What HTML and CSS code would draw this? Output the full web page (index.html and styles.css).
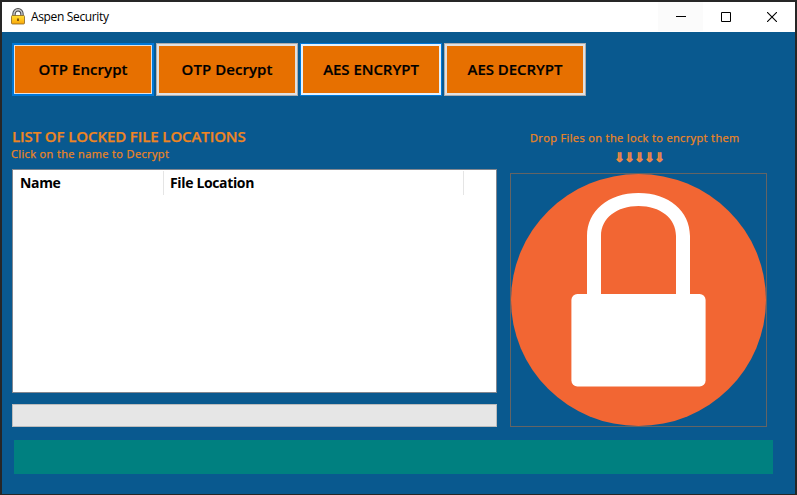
FILE: index.html
```html
<!DOCTYPE html>
<html lang="en">
<head>
<meta charset="utf-8">
<title>Aspen Security</title>
<link rel="stylesheet" href="styles.css">
</head>
<body>
<div class="window">
  <header class="titlebar">
    <svg class="app-icon" width="16" height="18" viewBox="0 0 16 18">
      <defs><linearGradient id="gold" x1="0" y1="0" x2="0" y2="1"><stop offset="0" stop-color="#ffe03a"/><stop offset="0.45" stop-color="#ffc81e"/><stop offset="1" stop-color="#f8a50c"/></linearGradient></defs>
      <path d="M4 9V6a4 4.200 0 0 1 8 0v3" fill="none" stroke="#4b4b4b" stroke-width="3.4"/>
      <path d="M4 9V6a4 4.200 0 0 1 8 0v3" fill="none" stroke="#c9c9c9" stroke-width="1.4"/>
      <rect x="1.500" y="7.500" width="13" height="8.500" rx="1" fill="url(#gold)" stroke="#8a6420" stroke-width=".8"/>
      <path d="M7.200 10.500h1.600v2.500H7.200z" fill="#6b3c08"/>
    </svg>
    <span class="app-name">Aspen Security</span>
    <div class="controls">
      <span class="control hovered"><svg width="10" height="10"><path d="M0 4.500h10" stroke="#000"/></svg></span>
      <span class="control"><svg width="10" height="10"><path d="M.5.5h9v9h-9z" fill="none" stroke="#000"/></svg></span>
      <span class="control"><svg width="10" height="10"><path d="M0 0l10 10M10 0L0 10" stroke="#000" stroke-width="1.1"/></svg></span>
    </div>
  </header>
  <main class="content">
    <nav class="toolbar">
      <button class="action focused"><span class="mixed">OTP Encrypt</span></button>
      <button class="action"><span class="mixed">OTP Decrypt</span></button>
      <button class="action hot"><span class="caps">AES ENCRYPT</span></button>
      <button class="action"><span class="caps">AES DECRYPT</span></button>
    </nav>
    <div class="panels">
      <section class="files">
        <h1>LIST OF LOCKED FILE LOCATIONS</h1>
        <p class="hint">Click on the name to Decrypt</p>
        <div class="list">
          <div class="col name">Name</div>
          <div class="col location">File Location</div>
        </div>
        <div class="progress"></div>
      </section>
      <section class="drop">
        <p class="drop-label">Drop Files on the lock to encrypt them</p>
        <p class="arrows">⇓⇓⇓⇓⇓</p>
        <div class="target">
          <svg width="255" height="252" viewBox="0 0 255 252">
            <ellipse cx="127.500" cy="126" rx="127.500" ry="126" fill="#f26633"/>
            <path fill="#fff" d="M76 122V62C76 37 97 19 127.500 19S179 37 179 62V122H165V62C165 44 149 32 127.500 32S90 44 90 62V122Z"/>
            <rect x="60.400" y="120" width="134.200" height="92.500" rx="6" fill="#fff"/>
          </svg>
        </div>
      </section>
    </div>
    <div class="status"></div>
  </main>
</div>
</body>
</html>
```
FILE: styles.css
```css
* { box-sizing: border-box; }
body { margin: 0; background: #262626; font-family: "Open Sans", sans-serif; }
h1, p { margin: 0; white-space: nowrap; }
svg { display: block; }
.window { width: 797px; height: 495px; padding: 2px 2px 1px; }
.titlebar { height: 30px; background: #fff; display: flex; align-items: center; padding-left: 8px; }
.app-icon { margin-top: -1px; }
.app-name { margin-left: 5px; font-size: 12px; line-height: 16px; letter-spacing: -0.35px; color: #000; }
.controls { display: flex; margin-left: auto; height: 100%; }
.control { width: 45px; height: 29px; display: flex; align-items: center; justify-content: center; }
.control:last-child { width: 47px; }
.hovered { background: #fbfbfb; }
.content { height: 462px; background: #09598f; padding: 11px 0 0 10px; }
.toolbar { display: flex; gap: 2px; }
.action { width: 142px; height: 53px; margin: 0; padding: 0 0 2px; background: #e77000; border: 1px solid #adadad; box-shadow: inset 0 0 0 2px #e1e1e1; color: #000; font: 600 15px/20px "Open Sans", sans-serif; white-space: nowrap; -webkit-text-stroke: 0.2px #000; }
.focused { border: 2px solid #0078d7; box-shadow: inset 0 0 0 1px #e1e1e1; }
.hot { border-color: #0078d7; box-shadow: inset 0 0 0 2px #e5f1fb; }
.mixed { letter-spacing: 0.05px; }
.caps { letter-spacing: -0.05px; }
.panels { display: flex; height: 331px; }
.files { width: 485px; padding-top: 30px; }
h1 { font-size: 15px; line-height: 20px; font-weight: 600; letter-spacing: -0.1px; color: #ee8522; -webkit-text-stroke: 0.25px #ee8522; }
.hint, .drop-label { font-size: 11px; line-height: 14px; letter-spacing: 0.37px; color: #ee8522; -webkit-text-stroke: 0.25px #ee8522; }
.hint { margin: 1px 0 0 -1px; }
.list { margin-top: 8px; height: 224px; background: #fff; border: 1px solid #828790; display: flex; padding-top: 1px; font: bold 14px/24px "Open Sans", sans-serif; letter-spacing: -0.35px; color: #000; }
.col { height: 24px; border-right: 1px solid #e5e5e5; }
.name { width: 151px; padding-left: 7px; }
.location { width: 300px; padding-left: 6px; }
.progress { margin-top: 11px; height: 23px; background: #e6e6e6; border: 1px solid #bcbcbc; }
.drop { margin-left: 13px; width: 257px; padding-top: 35px; }
.drop-label { margin-left: 20px; }
.arrows { margin: 5px 0 0 104px; height: 23px; font: bold 13px/15px "DejaVu Sans", sans-serif; letter-spacing: -0.9px; color: #f58a45; -webkit-text-stroke: 0.6px #f58a45; }
.target { height: 254px; border: 1px solid #646464; }
.status { width: 759px; height: 34px; margin: 13px 0 0 2px; background: #008080; }
```
